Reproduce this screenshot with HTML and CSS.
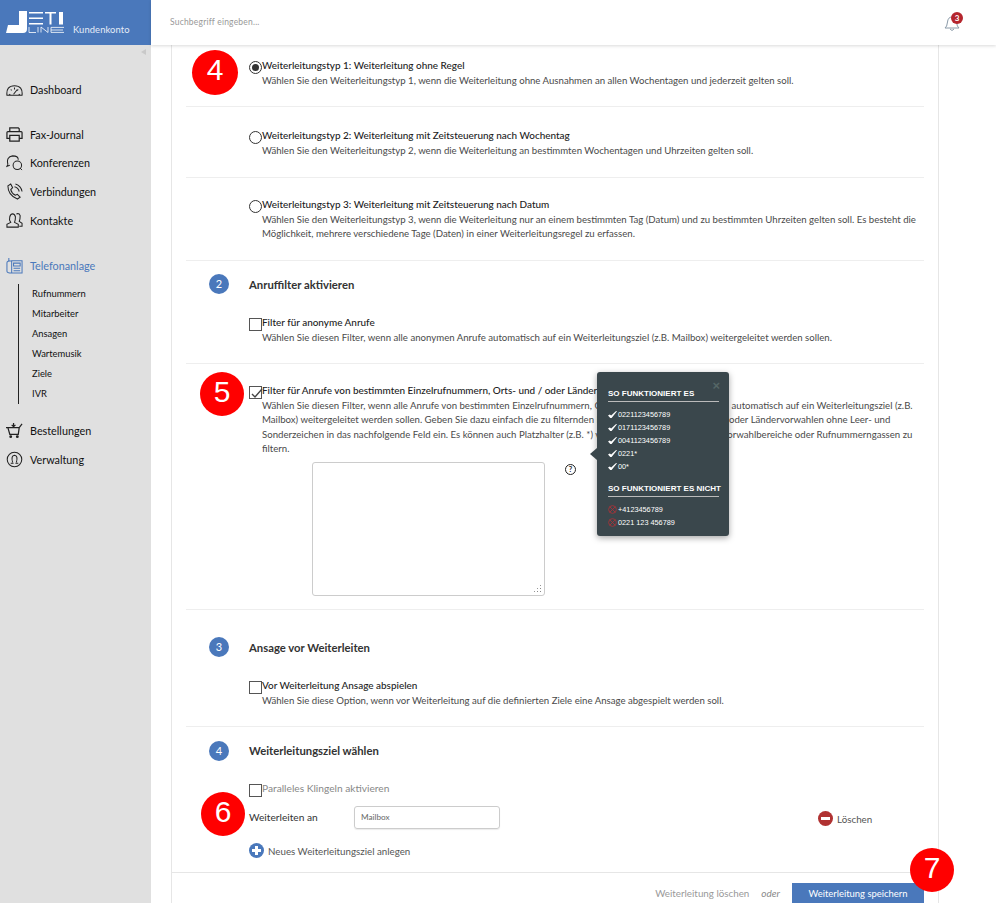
FILE: index.html
```html
<!DOCTYPE html>
<html lang="de">
<head>
  <meta charset="UTF-8" />
  <title>Weiterleitung</title>
  <link rel="stylesheet" href="styles.css">
</head>
<body>
  <aside class="sidebar">
    <div class="brand">
      <div class="logo">
        <svg width="60" height="24" viewBox="0 0 60 24">
          <path d="M13 0h8v18q0 4-4 4H0l2-8h11z" fill="#fff"/>
          <path d="M23 1h14v1.500H23zM23 6.500h14V8H23zM23 12h14v1.500H23zM39 1h11v1.500h-4.500V13.500h-2V2.500H39zM53 1h4v12.500h-4z" fill="#fff"/>
          <path d="M23 16v5.500h7M32 16v5.500M35 21.500V16l7 5.500V16M58 16.400H45v5h13M45 19h12" fill="none" stroke="#fff" stroke-width=".8"/>
        </svg>
      </div>
      <span class="brand-name">Kundenkonto</span>
    </div>
    <div class="collapse"><span class="collapse-arrow"></span></div>
    <nav class="nav">
      <a class="nav-item nav-first">
        <svg class="nav-icon" viewBox="0 0 18 18"><path d="M1 15q-1-10 8-10t8 10zM3 15l1.500-1M15 15l-1.500-1M9 7v2M5 9l1 1M13 9l-1 1M8 14l4-5" fill="none" stroke="#222" stroke-width="1.100"/></svg>
        Dashboard
      </a>
      <a class="nav-item nav-gap">
        <svg class="nav-icon" viewBox="0 0 18 18"><path d="M4 6V2h9l1 1v3M4 13H1V7q0-1 1-1h14q1 0 1 1v6h-3M4 10h10v6H4z" fill="none" stroke="#222" stroke-width="1.300"/></svg>
        Fax-Journal
      </a>
      <a class="nav-item">
        <svg class="nav-icon" viewBox="0 0 18 18"><path d="M2 11Q0 3 7 2q6 0 6 4M2 11l-1 2 3-1" fill="none" stroke="#222" stroke-width="1.100"/><circle cx="12" cy="12" r="4.500" fill="none" stroke="#222" stroke-width="1.100"/><path d="M15 15l2 2" stroke="#222"/></svg>
        Konferenzen
      </a>
      <a class="nav-item">
        <svg class="nav-icon" viewBox="0 0 18 18"><path d="M2 3l3-2 2 4-2 2q1 4 5 6l2-1 3 3-3 2Q2 13 2 3zM9 4q4 1 5 5M10 1q6 2 7 8" fill="none" stroke="#222" stroke-width="1.100"/></svg>
        Verbindungen
      </a>
      <a class="nav-item">
        <svg class="nav-icon" viewBox="0 0 18 18"><path d="M1 16v-3l4-2q-2-3-1-6 1-3 3-3t3 3q0 4-1 6l4 2v3zM11 2q3-1 4 2 0 4-1 6l3 2v3h-3" fill="none" stroke="#222" stroke-width="1.100"/></svg>
        Kontakte
      </a>
      <a class="nav-item nav-active">
        <svg class="nav-icon" viewBox="0 0 18 18"><path d="M6 4h11v13H6zM6 4Q1 4 1 6v9q0 2 5 2V4M3 4V1M8 6.500h7v3H8zM8 12h7M8 14.500h7" fill="none" stroke="#4a78bb" stroke-width="1.100"/></svg>
        Telefonanlage
      </a>
      <ul class="subnav">
        <li>Rufnummern</li>
        <li>Mitarbeiter</li>
        <li>Ansagen</li>
        <li>Wartemusik</li>
        <li>Ziele</li>
        <li>IVR</li>
      </ul>
      <a class="nav-item">
        <svg class="nav-icon" viewBox="0 0 18 18"><path d="M0 6h14l3-4M2 6l2 7h9l1-7M8 1v4M6 3l2 2 2-2" fill="none" stroke="#222" stroke-width="1.300"/><circle cx="5" cy="15.500" r="1.500" fill="#222"/><circle cx="12" cy="15.500" r="1.500" fill="#222"/></svg>
        Bestellungen
      </a>
      <a class="nav-item">
        <svg class="nav-icon" viewBox="0 0 18 18"><circle cx="9" cy="9" r="7.700" fill="none" stroke="#222" stroke-width="1.100"/><path d="M7 12Q5 5 9 4.500 13 5 11 12M5 13h3M10 13h3" fill="none" stroke="#222" stroke-width="1.100"/></svg>
        Verwaltung
      </a>
    </nav>
  </aside>

  <div class="main">
    <header class="topbar">
      <span class="search">Suchbegriff eingeben...</span>
      <div class="bell">
        <svg width="16" height="17" viewBox="0 0 16 17"><path d="M1 13q2-1 2.500-6Q4 2 8 2t4.500 5q.5 5 2.500 6zM6 14q2 3 4 0" fill="none" stroke="#8a9aa8" stroke-width="1"/></svg>
        <span class="bell-count">3</span>
      </div>
    </header>

    <div class="panel">
      <div class="row row-a">
        <span class="radio radio-on"></span>
        <div class="row-text">
          <div class="row-title">Weiterleitungstyp 1: Weiterleitung ohne Regel</div>
          <p>Wählen Sie den Weiterleitungstyp 1, wenn die Weiterleitung ohne Ausnahmen an allen Wochentagen und jederzeit gelten soll.</p>
        </div>
      </div>
      <div class="row row-b">
        <span class="radio"></span>
        <div class="row-text">
          <div class="row-title">Weiterleitungstyp 2: Weiterleitung mit Zeitsteuerung nach Wochentag</div>
          <p>Wählen Sie den Weiterleitungstyp 2, wenn die Weiterleitung an bestimmten Wochentagen und Uhrzeiten gelten soll.</p>
        </div>
      </div>
      <div class="row row-c">
        <span class="radio"></span>
        <div class="row-text">
          <div class="row-title">Weiterleitungstyp 3: Weiterleitung mit Zeitsteuerung nach Datum</div>
          <p>Wählen Sie den Weiterleitungstyp 3, wenn die Weiterleitung nur an einem bestimmten Tag (Datum) und zu bestimmten Uhrzeiten gelten soll. Es besteht die Möglichkeit, mehrere verschiedene Tage (Daten) in einer Weiterleitungsregel zu erfassen.</p>
        </div>
      </div>

      <div class="section-head sh-2"><span class="step">2</span><h2>Anruffilter aktivieren</h2></div>
      <div class="row row-d">
        <span class="check"></span>
        <div class="row-text">
          <div class="row-title">Filter für anonyme Anrufe</div>
          <p>Wählen Sie diesen Filter, wenn alle anonymen Anrufe automatisch auf ein Weiterleitungsziel (z.B. Mailbox) weitergeleitet werden sollen.</p>
        </div>
      </div>
      <div class="row row-e">
        <span class="check">
          <svg width="13" height="13" viewBox="0 0 13 13"><path d="M2 7l3 3 7-8" fill="none" stroke="#444" stroke-width="1.400"/></svg>
        </span>
        <div class="row-text">
          <div class="row-title">Filter für Anrufe von bestimmten Einzelrufnummern, Orts- und / oder Ländervorwahlen</div>
          <p>Wählen Sie diesen Filter, wenn alle Anrufe von bestimmten Einzelrufnummern, Orts- und / oder Ländervorwahl automatisch auf ein Weiterleitungsziel (z.B. Mailbox) weitergeleitet werden sollen. Geben Sie dazu einfach die zu filternden Einzelrufnummern, Orts- und / oder Ländervorwahlen ohne Leer- und Sonderzeichen in das nachfolgende Feld ein. Es können auch Platzhalter (z.B. *) verwendet werden, um ganze Vorwahlbereiche oder Rufnummerngassen zu filtern.</p>
          <div class="filter-field">
            <div class="textarea"><span class="grip"></span></div>
            <span class="help">?</span>
          </div>
        </div>
      </div>

      <div class="section-head sh-3"><span class="step">3</span><h2>Ansage vor Weiterleiten</h2></div>
      <div class="row row-f">
        <span class="check"></span>
        <div class="row-text">
          <div class="row-title">Vor Weiterleitung Ansage abspielen</div>
          <p>Wählen Sie diese Option, wenn vor Weiterleitung auf die definierten Ziele eine Ansage abgespielt werden soll.</p>
        </div>
      </div>

      <div class="section-head sh-4"><span class="step">4</span><h2>Weiterleitungsziel wählen</h2></div>
      <div class="target">
        <div class="parallel"><span class="check"></span><span>Paralleles Klingeln aktivieren</span></div>
        <div class="target-row">
          <label>Weiterleiten an</label>
          <div class="input">Mailbox</div>
          <div class="delete"><span class="delete-icon"></span>Löschen</div>
        </div>
        <div class="add"><span class="add-icon"></span>Neues Weiterleitungsziel anlegen</div>
      </div>

      <div class="actions">
        <span class="remove">Weiterleitung löschen</span>
        <em>oder</em>
        <button>Weiterleitung speichern</button>
      </div>
    </div>

    <div class="tooltip">
      <span class="tip-arrow"></span>
      <span class="tip-close">×</span>
      <h4>So funktioniert es</h4>
      <ul>
        <li><svg class="tip-icon" viewBox="0 0 10 8"><path d="M0 5l2-1 1.500 1L9 0l1 .500L4 8H2.500z" fill="#fff"/></svg>0221123456789</li>
        <li><svg class="tip-icon" viewBox="0 0 10 8"><path d="M0 5l2-1 1.500 1L9 0l1 .500L4 8H2.500z" fill="#fff"/></svg>0171123456789</li>
        <li><svg class="tip-icon" viewBox="0 0 10 8"><path d="M0 5l2-1 1.500 1L9 0l1 .500L4 8H2.500z" fill="#fff"/></svg>0041123456789</li>
        <li><svg class="tip-icon" viewBox="0 0 10 8"><path d="M0 5l2-1 1.500 1L9 0l1 .500L4 8H2.500z" fill="#fff"/></svg>0221*</li>
        <li><svg class="tip-icon" viewBox="0 0 10 8"><path d="M0 5l2-1 1.500 1L9 0l1 .500L4 8H2.500z" fill="#fff"/></svg>00*</li>
      </ul>
      <h4>So funktioniert es nicht</h4>
      <ul>
        <li><svg class="tip-icon" viewBox="0 0 10 10"><circle cx="5" cy="5" r="4.300" fill="none" stroke="#a5343a"/><path d="M2 2l6 6M8 2l-6 6" stroke="#a5343a"/></svg>+4123456789</li>
        <li><svg class="tip-icon" viewBox="0 0 10 10"><circle cx="5" cy="5" r="4.300" fill="none" stroke="#a5343a"/><path d="M2 2l6 6M8 2l-6 6" stroke="#a5343a"/></svg>0221 123 456789</li>
      </ul>
    </div>

    <span class="marker m4">4</span>
    <span class="marker m5">5</span>
    <span class="marker m6">6</span>
    <span class="marker m7">7</span>
  </div>
</body>
</html>
```

FILE: styles.css
```css
html, body {
  height: 903px;
  overflow: hidden;
}

body {
  margin: 0;
  display: flex;
  background-color: #fff;
  color: #4a4a4a;
  font-family: Lato, "Liberation Sans", sans-serif;
  font-size: 10.2px;
}

p, ul, h2, h4 {
  margin: 0;
  padding: 0;
}

ul {
  list-style: none;
}

/* sidebar */
.sidebar {
  width: 151px;
  flex: none;
  background-color: #e0e0e0;
}

.brand {
  height: 45px;
  background-color: #4a78bb;
  display: flex;
  padding: 11px 0 0 6px;
  box-sizing: border-box;
  color: #fff;
}

.logo {
  height: 24px;
  width: 67px;
}

.logo svg {
  display: block;
}

.brand-name {
  font-size: 9.400px;
  letter-spacing: .1px;
  line-height: 12px;
  margin-top: 13px;
  color: #e4ecf7;
}

.collapse {
  height: 9px;
  padding: 4px 0 0 141px;
}

.collapse-arrow {
  display: block;
  width: 0;
  height: 0;
  border-top: 3px solid transparent;
  border-bottom: 3px solid transparent;
  border-right: 5px solid #c9c9c9;
}

.nav {
  padding-top: 17px;
}

.nav-item {
  display: flex;
  align-items: center;
  gap: 7px;
  height: 28.700px;
  padding-left: 6px;
  color: #111;
  font-size: 10.800px;
}

.nav-gap {
  margin-top: 16px;
}

.nav-icon {
  width: 17px;
  height: 17px;
  flex: none;
}

.nav-active {
  margin-top: 17px;
  color: #4a78bb;
}

.subnav {
  margin: 4px 0 12px 18px;
  border-left: 1px solid #222;
  padding-left: 13px;
  color: #111;
  font-size: 9.400px;
  line-height: 20px;
}

/* top bar */
.main {
  flex: 1;
  min-width: 0;
  position: relative;
}

.topbar {
  height: 45px;
  box-sizing: border-box;
  display: flex;
  align-items: center;
  justify-content: space-between;
  padding: 0 36px 2px 19px;
  box-shadow: 0 1px 3px rgba(0,0,0,0.15);
  position: relative;
  z-index: 1;
  background-color: #fff;
}

.search {
  font-size: 8.500px;
  color: #999;
  letter-spacing: .2px;
}

.bell {
  position: relative;
  height: 17px;
  margin-top: 3px;
}

.bell-count {
  position: absolute;
  top: -3px;
  left: 7px;
  width: 12px;
  height: 12px;
  border-radius: 50%;
  background-color: #b5262e;
  color: #fff;
  font-size: 8px;
  font-weight: 700;
  line-height: 12px;
  text-align: center;
}

/* panel */
.panel {
  margin: 0 57px 0 20px;
  height: 858px;
  border-left: 1px solid #e6e6e6;
  border-right: 1px solid #e6e6e6;
  padding: 0 14px;
  position: relative;
}

.row {
  display: flex;
  padding-left: 63px;
  border-bottom: 1px solid #eee;
  box-sizing: border-box;
}

.row-a { height: 62px; padding-top: 13px; }
.row-b { height: 71px; padding-top: 21px; }
.row-c { height: 83px; padding-top: 19px; }
.row-d { height: 63px; padding-top: 14px; }
.row-e { height: 246px; padding-top: 19px; }
.row-f { height: 63px; padding-top: 14px; }

.row-text {
  flex: 1;
  min-width: 0;
  line-height: 14.500px;
  font-size: 9.640px;
}

.row-title {
  color: #222;
  font-weight: 500;
  font-size: 9.950px;
}

.radio {
  width: 11px;
  height: 11px;
  flex: none;
  margin-top: 3px;
  border: 1px solid #333;
  border-radius: 50%;
  position: relative;
}

.radio-on::after {
  content: "";
  position: absolute;
  inset: 2px;
  border-radius: 50%;
  background-color: #333;
}

.check {
  width: 11px;
  height: 11px;
  flex: none;
  margin-top: 3px;
  border: 1px solid #555;
  display: block;
}

.check svg {
  display: block;
}

.section-head {
  display: flex;
  align-items: center;
  padding-left: 23px;
  gap: 20px;
  box-sizing: border-box;
}

.sh-2 { height: 40px; padding-top: 6px; }
.sh-3 { height: 54px; padding-top: 20px; }
.sh-4 { height: 47px; }

.step {
  width: 20px;
  height: 20px;
  border-radius: 50%;
  background-color: #4a78bb;
  color: #fff;
  font-size: 11px;
  line-height: 20px;
  text-align: center;
}

.section-head h2 {
  font-size: 11.300px;
  font-weight: 700;
  color: #333;
}

.filter-field {
  display: flex;
  align-items: flex-start;
  margin: 6px 0 0 50px;
}

.textarea {
  width: 233px;
  height: 134px;
  box-sizing: border-box;
  border: 1px solid #ccc;
  border-radius: 3px;
  position: relative;
}

.grip {
  position: absolute;
  right: 2px;
  bottom: 2px;
  width: 9px;
  height: 9px;
  background-image: radial-gradient(#888 1px, transparent 1px);
  background-size: 3px 3px;
  clip-path: polygon(100% 0, 100% 100%, 0 100%);
}

.help {
  margin: 2px 0 0 20px;
  width: 9px;
  height: 9px;
  border: 1px solid #222;
  border-radius: 50%;
  color: #222;
  font-size: 7.500px;
  font-weight: 700;
  line-height: 9px;
  text-align: center;
}

/* ziel */
.target {
  height: 98px;
  padding: 1px 0 0 63px;
  box-sizing: border-box;
  position: relative;
}

.parallel {
  display: flex;
  align-items: flex-start;
  height: 30px;
  padding-top: 7px;
  box-sizing: border-box;
  color: #888;
  line-height: 13px;
}

.parallel .check {
  margin-top: 2px;
}

.target-row {
  display: flex;
  align-items: center;
  height: 23px;
  color: #333;
}

.target-row label {
  width: 105px;
  flex: none;
}

.input {
  width: 146px;
  height: 23px;
  margin-top: 2px;
  box-sizing: border-box;
  border: 1px solid #ccc;
  border-radius: 3px;
  box-shadow: 0 1px 1px rgba(0,0,0,0.08);
  padding-left: 6px;
  font-size: 8.200px;
  line-height: 21px;
  color: #666;
}

.delete {
  margin: 4px 0 0 318px;
  display: flex;
  align-items: center;
  gap: 4px;
  white-space: nowrap;
  color: #555;
  font-size: 9.800px;
}

.delete-icon {
  width: 15px;
  height: 15px;
  border-radius: 50%;
  background-color: #b03232;
  position: relative;
  margin-top: -1px;
}

.delete-icon::after {
  content: "";
  position: absolute;
  left: 3px;
  right: 3px;
  top: 6px;
  height: 3px;
  background-color: #fff;
}

.add {
  display: flex;
  align-items: center;
  gap: 4px;
  margin-top: 15px;
  color: #555;
  font-size: 9.750px;
}

.add-icon {
  width: 15px;
  height: 15px;
  border-radius: 50%;
  background-color: #4a78bb;
  background-image: linear-gradient(#fff, #fff), linear-gradient(#fff, #fff);
  background-size: 9px 3px, 3px 9px;
  background-position: center;
  background-repeat: no-repeat;
}

.actions {
  margin: 0 -14px;
  padding: 10px 14px 0 0;
  border-top: 1px solid #e6e6e6;
  display: flex;
  justify-content: flex-end;
  align-items: center;
  color: #999;
  font-size: 9.800px;
}

.actions em {
  margin: 0 12px;
  color: #888;
  font-size: 10px;
}

.actions button {
  width: 132px;
  height: 20px;
  border: none;
  padding: 0;
  background-color: #4a78bb;
  color: #fff;
  font-family: inherit;
  font-size: 9.450px;
}

/* hilfe popup */
.tooltip {
  position: absolute;
  top: 372px;
  left: 446px;
  width: 132px;
  height: 164px;
  box-sizing: border-box;
  padding: 14px 10px 0 11px;
  background-color: #3a474c;
  border-radius: 3px;
  box-shadow: 0 2px 6px rgba(0,0,0,0.35);
  color: #fff;
  font-family: "Liberation Sans", sans-serif;
  font-size: 7.300px;
}

.tooltip h4 {
  font-size: 8px;
  font-weight: 700;
  text-transform: uppercase;
  line-height: 15px;
  border-bottom: 1px solid #bbb;
  margin-bottom: 6px;
  white-space: nowrap;
}

.tooltip ul {
  margin-bottom: 8px;
}

.tooltip li {
  display: flex;
  align-items: center;
  line-height: 13px;
}

.tip-icon {
  width: 9px;
  height: 9px;
  flex: none;
  margin-right: 1px;
}

.tip-close {
  position: absolute;
  top: 6px;
  right: 9px;
  color: #566;
  font-size: 13px;
  font-weight: 700;
}

.tip-arrow {
  position: absolute;
  left: -7px;
  top: 76px;
  border-top: 6px solid transparent;
  border-bottom: 6px solid transparent;
  border-right: 7px solid #3a474c;
}

/* rote markierungen */
.marker {
  position: absolute;
  width: 44px;
  height: 44px;
  border-radius: 50%;
  background-color: #f00;
  color: #fff;
  font-family: "Liberation Sans", sans-serif;
  font-size: 30px;
  line-height: 40px;
  text-align: center;
  z-index: 2;
}

.m4 { left: 41px; top: 50px; width: 46px; height: 45px; }
.m5 { left: 49px; top: 372px; }
.m6 { left: 50px; top: 792px; }
.m7 { left: 759px; top: 848px; }
```
